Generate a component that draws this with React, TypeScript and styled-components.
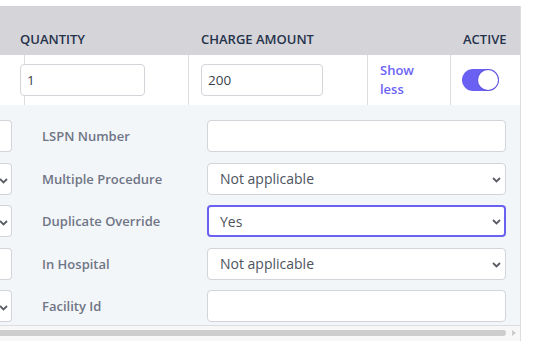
import React, { useState } from "react";
import styled, { createGlobalStyle } from "styled-components";

const GlobalStyle = createGlobalStyle`
  html, body {
    margin: 0;
    padding: 0;
    background: #ffffff;
    font-family: "Open Sans", "Liberation Sans", sans-serif;
  }
`;

const Table = styled.div`
  width: 521px;
  margin-top: 6px;
  border-right: 1px solid #dcdde1;
  box-sizing: border-box;
`;

const columns = "8px 181px 179px 83px 1fr";

const HeadRow = styled.div`
  display: grid;
  grid-template-columns: ${columns};
  height: 49px;
  background: #d5d4d9;
`;

const HeadCell = styled.div`
  display: flex;
  align-items: flex-end;
  padding: 0 12px 7px;
  font-size: 13px;
  font-weight: 600;
  line-height: 18px;
  color: #25324b;
  white-space: nowrap;
`;

const BodyRow = styled.div`
  display: grid;
  grid-template-columns: ${columns};
  height: 50px;
  background: #ffffff;
`;

const Cell = styled.div<{ $center?: boolean; $last?: boolean }>`
  box-sizing: border-box;
  display: flex;
  align-items: ${(p) => (p.$center ? "center" : "flex-start")};
  padding: ${(p) => (p.$center ? "0 12px 0 11px" : "9px 12px 0")};
  border-right: ${(p) => (p.$last ? "none" : "1px solid #dcdde1")};
`;

const TextInput = styled.input<{ $width: number }>`
  box-sizing: border-box;
  width: ${(p) => p.$width}px;
  height: 32px;
  padding: 0 6px;
  border: 1px solid #d3d4d9;
  border-radius: 4px;
  background: #fff;
  font-family: inherit;
  font-size: 13.5px;
  color: #3a3f48;
  outline: none;
`;

const LinkText = styled.a`
  margin-top: -3px;
  font-size: 13px;
  font-weight: 600;
  line-height: 19px;
  color: #6c63f5;
  cursor: pointer;
`;

const Switch = styled.button<{ $on: boolean }>`
  position: relative;
  width: 37px;
  height: 22px;
  padding: 0;
  border: none;
  border-radius: 11px;
  background: ${(p) => (p.$on ? "#6a61f2" : "#c9cbd1")};
  cursor: pointer;
`;

const Knob = styled.span<{ $on: boolean }>`
  position: absolute;
  top: 1px;
  left: ${(p) => (p.$on ? "16px" : "1px")};
  width: 20px;
  height: 20px;
  border-radius: 50%;
  background: #fff;
  box-shadow: 0 0 0 1px rgba(70, 60, 200, 0.35);
`;

const Details = styled.div`
  display: grid;
  grid-template-columns: 12px 135px 299px;
  column-gap: 30px;
  row-gap: 10.5px;
  padding: 15px 0 3px;
  background: #f3f6f9;
  border-bottom: 1px solid #dcdde1;
`;

const Stub = styled.div`
  box-sizing: border-box;
  position: relative;
  height: 32px;
  background: #fff;
  border: 1px solid #d3d4d9;
  border-left: none;
  border-radius: 0 4px 4px 0;
`;

const Label = styled.div`
  display: flex;
  align-items: center;
  font-size: 13px;
  font-weight: 600;
  color: #6f7585;
  white-space: nowrap;
`;

const FieldInput = styled.input`
  box-sizing: border-box;
  width: 100%;
  height: 32px;
  border: 1px solid #d3d4d9;
  border-radius: 4px;
  background: #fff;
  font-family: inherit;
  outline: none;
`;

const SelectWrap = styled.div`
  position: relative;
  height: 32px;
`;

const Select = styled.select<{ $focused?: boolean }>`
  box-sizing: border-box;
  appearance: none;
  width: 100%;
  height: 32px;
  padding: 0 0 0 ${(p) => (p.$focused ? "11px" : "12px")};
  border: ${(p) => (p.$focused ? "2px solid #6a61f2" : "1px solid #d3d4d9")};
  border-radius: 4px;
  background: #fff;
  font-family: inherit;
  font-size: 14px;
  color: #4d535d;
  outline: none;
`;

const Chevron = styled.svg<{ $right: number }>`
  position: absolute;
  top: 14px;
  right: ${(p) => p.$right}px;
  pointer-events: none;
`;

const ScrollTrack = styled.div`
  display: flex;
  align-items: center;
  height: 16px;
  padding-bottom: 2px;
  box-sizing: border-box;
  background: #f7f7f7;
`;

const ScrollThumb = styled.div`
  flex: 1;
  height: 6px;
  border-radius: 0 3px 3px 0;
  background: #cdcdcd;
`;

const ScrollArrow = styled.div`
  width: 0;
  height: 0;
  margin: 0 4px 0 6px;
  border-top: 3.5px solid transparent;
  border-bottom: 3.5px solid transparent;
  border-left: 4px solid #cbcbcb;
`;

const ChevronIcon = ({ right }: { right: number }) => (
  <Chevron $right={right} width="9" height="6" viewBox="0 0 9 6">
    <path d="M1 1l3.5 3.5L8 1" fill="none" stroke="#5a5d63" strokeWidth="1.8" />
  </Chevron>
);

type Field = {
  label: string;
  kind: "input" | "select";
  stub: "input" | "select";
  value?: string;
  focused?: boolean;
};

const fields: Field[] = [
  { label: "LSPN Number", kind: "input", stub: "input" },
  { label: "Multiple Procedure", kind: "select", stub: "select", value: "Not applicable" },
  { label: "Duplicate Override", kind: "select", stub: "select", value: "Yes", focused: true },
  { label: "In Hospital", kind: "select", stub: "input", value: "Not applicable" },
  { label: "Facility Id", kind: "input", stub: "select" }
];

const App = () => {
  const [active, setActive] = useState(true);

  return (
    <>
      <GlobalStyle />
      <Table>
        <HeadRow>
          <HeadCell />
          <HeadCell>QUANTITY</HeadCell>
          <HeadCell>CHARGE AMOUNT</HeadCell>
          <HeadCell />
          <HeadCell>ACTIVE</HeadCell>
        </HeadRow>
        <BodyRow>
          <Cell />
          <Cell>
            <TextInput $width={125} defaultValue="1" />
          </Cell>
          <Cell>
            <TextInput $width={122} defaultValue="200" />
          </Cell>
          <Cell>
            <LinkText>
              Show
              <br />
              less
            </LinkText>
          </Cell>
          <Cell $center $last>
            <Switch $on={active} onClick={() => setActive(!active)}>
              <Knob $on={active} />
            </Switch>
          </Cell>
        </BodyRow>
        <Details>
          {fields.map((f) => (
            <React.Fragment key={f.label}>
              <Stub>{f.stub === "select" && <ChevronIcon right={3} />}</Stub>
              <Label>{f.label}</Label>
              {f.kind === "input" ? (
                <FieldInput />
              ) : (
                <SelectWrap>
                  <Select $focused={f.focused} defaultValue={f.value}>
                    <option>Not applicable</option>
                    <option>Yes</option>
                    <option>No</option>
                  </Select>
                  <ChevronIcon right={5} />
                </SelectWrap>
              )}
            </React.Fragment>
          ))}
        </Details>
        <ScrollTrack>
          <ScrollThumb />
          <ScrollArrow />
        </ScrollTrack>
      </Table>
    </>
  );
};

export default App;
